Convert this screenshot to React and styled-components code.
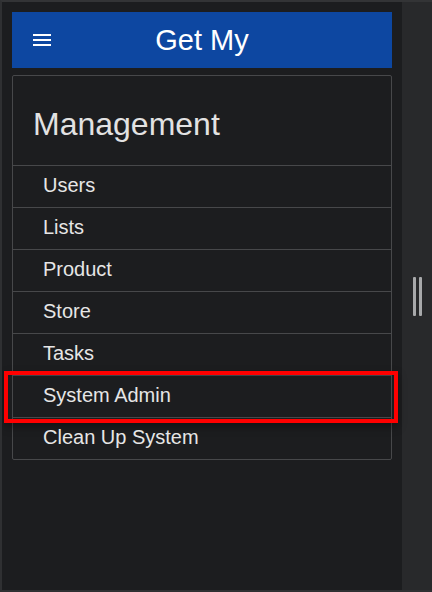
import React from "react";
import styled, { createGlobalStyle } from "styled-components";

const GlobalStyle = createGlobalStyle`
  html, body {
    margin: 0;
    padding: 0;
    background: #1c1d1f;
  }
  body {
    font-family: "Liberation Sans", Arial, sans-serif;
  }
`;

const Frame = styled.div`
  width: 432px;
  height: 592px;
  box-sizing: border-box;
  display: flex;
  border-top: 2px solid #333436;
  border-left: 2px solid #2f3032;
  border-bottom: 2px solid #2f3032;
  overflow: hidden;
`;

const Panel = styled.div`
  width: 400px;
  padding: 10px;
  box-sizing: border-box;
  background: #1c1d1f;
  display: flex;
  flex-direction: column;
  gap: 7px;
`;

const Gutter = styled.div`
  flex: 1;
  background: #28292b;
  display: flex;
  align-items: center;
  justify-content: center;
  gap: 3px;
  padding-left: 1px;
`;

const GripBar = styled.div`
  width: 3px;
  height: 39px;
  background: #a8a9ab;
  border-radius: 1px;
`;

const Header = styled.header`
  height: 56px;
  background: #0d47a1;
  display: flex;
  align-items: center;
  position: relative;
`;

const MenuButton = styled.button`
  width: 24px;
  height: 24px;
  margin-left: 18px;
  padding: 0;
  border: none;
  background: transparent;
  color: #fff;
  display: flex;
  z-index: 1;
`;

const Title = styled.h1`
  position: absolute;
  inset: 0;
  margin: 0;
  display: flex;
  align-items: center;
  justify-content: center;
  font-size: 29px;
  font-weight: 400;
  color: #fff;
`;

const Card = styled.div`
  border: 1px solid #47484a;
  border-radius: 2px;
`;

const CardTitle = styled.h2`
  margin: 0;
  padding: 30px 0 22px 20px;
  line-height: 37px;
  font-size: 32px;
  font-weight: 400;
  color: #e2e2e2;
`;

const Item = styled.div`
  position: relative;
  border-top: 1px solid ${(p) => (p.selected ? "#3e4347" : "#47484a")};
  padding: 8px 0 10px 30px;
  line-height: 23px;
  font-size: 20px;
  color: #e6e6e6;
`;

const Highlight = styled.div`
  position: absolute;
  top: -5px;
  left: -9px;
  right: -7px;
  bottom: -6px;
  border: 4px solid #ff0000;
  box-shadow: 0 4px 8px rgba(0, 0, 0, 0.35);
  pointer-events: none;
`;

const items = [
  "Users",
  "Lists",
  "Product",
  "Store",
  "Tasks",
  "System Admin",
  "Clean Up System",
];

const MenuIcon = () => (
  <svg width="24" height="24" viewBox="0 0 24 24" fill="currentColor">
    <path d="M3 18h18v-2H3v2zm0-5h18v-2H3v2zm0-7v2h18V6H3z" />
  </svg>
);

const App = () => {
  return (
    <>
      <GlobalStyle />
      <Frame>
        <Panel>
          <Header>
            <MenuButton>
              <MenuIcon />
            </MenuButton>
            <Title>Get My</Title>
          </Header>
          <Card>
            <CardTitle>Management</CardTitle>
            {items.map((name) => (
              <Item key={name} selected={name === "System Admin"}>
                {name}
                {name === "System Admin" && <Highlight />}
              </Item>
            ))}
          </Card>
        </Panel>
        <Gutter>
          <GripBar />
          <GripBar />
        </Gutter>
      </Frame>
    </>
  );
};

export default App;
